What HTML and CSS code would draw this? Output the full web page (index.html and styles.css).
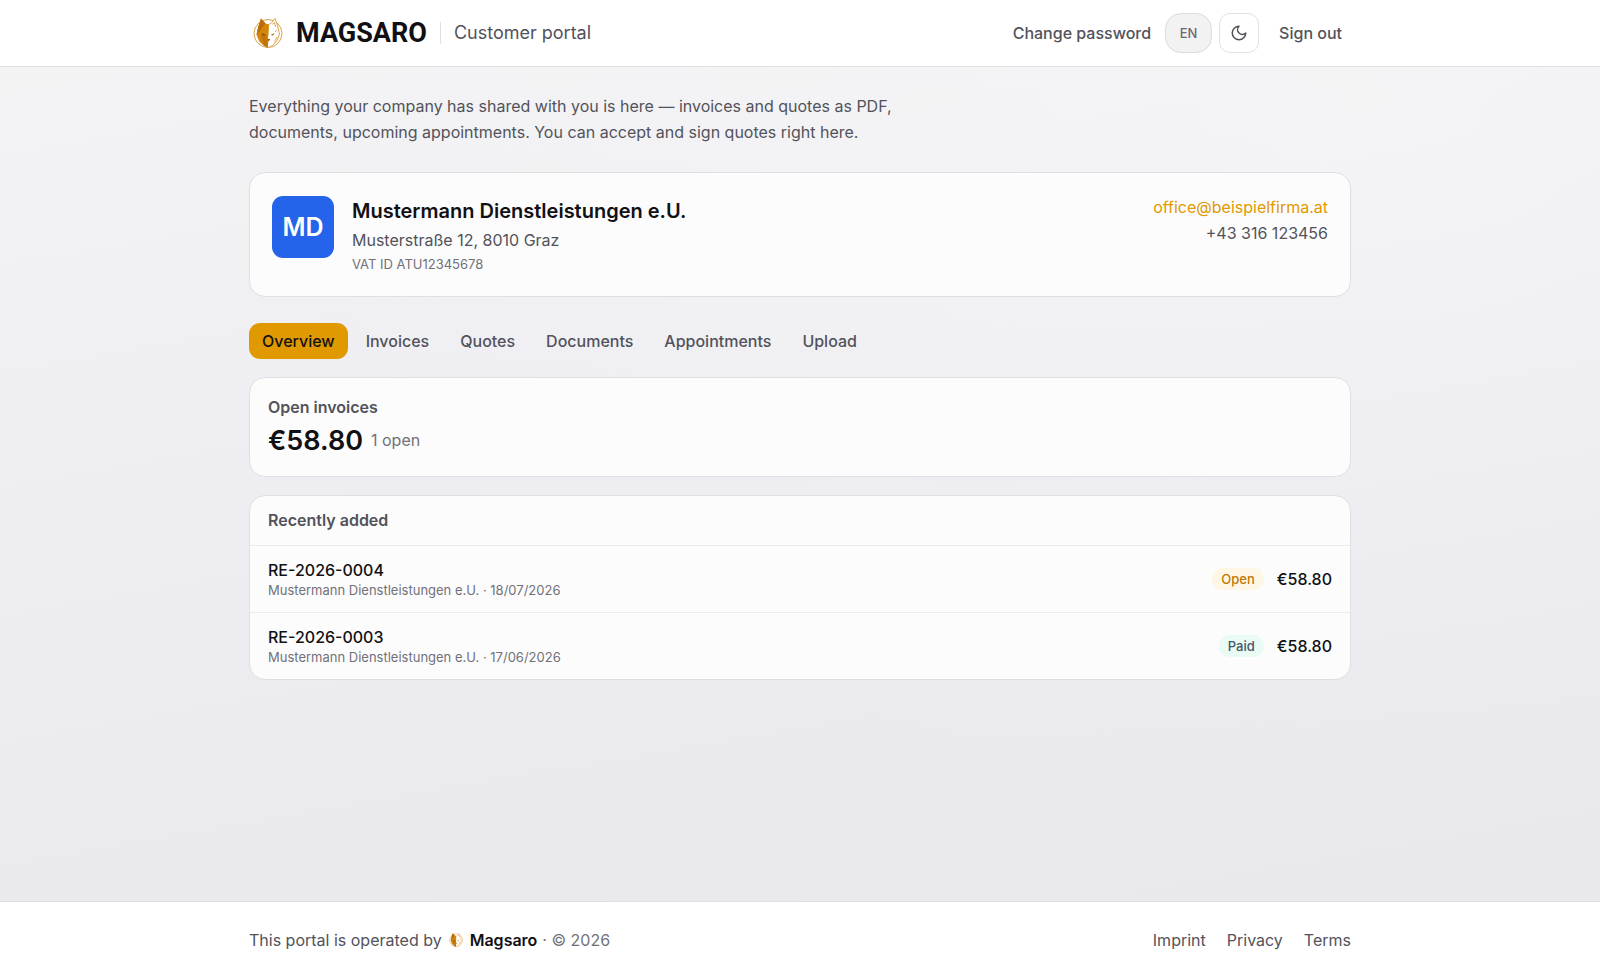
FILE: index.html
```html
<!DOCTYPE html>
<html lang="en">
<head>
    <meta charset="UTF-8">
    <meta name="viewport" content="width=device-width, initial-scale=1.0">
    <title>Customer portal</title>
    <link rel="stylesheet" href="styles.css">
</head>
<body>

    <!-- Wolf emblem, used in the header and the footer -->
    <svg class="sprite" aria-hidden="true">
        <symbol id="wolf" viewBox="0 0 60 60">
            <circle cx="30" cy="31" r="28" fill="#fff" stroke="#dda24a" stroke-width="2"/>
            <path d="M16 1 L25 11 L32 13 L32 30 L30 42 L32 46 L31 60 L21 55 L12 46 L7 33 L11 16 Z" fill="#d4860b"/>
            <path d="M16 1 L25 11 L20 17 L14 26 L7 33 L11 16 Z" fill="#b96c08"/>
            <path d="M16 32 L26 35 L27 43 L29 51 L30 60 L22 55 L18 44 Z" fill="#c0740a"/>
            <path d="M17 30 L27 34 L20 35 Z" fill="#8a5006"/>
            <path d="M32 13 L37 10 L44 1 L49 15 L53 32 L48 45 L39 55 L30 60" fill="#fff" stroke="#dda24a" stroke-width="2"/>
            <path d="M39 13 L43 9 L45 18 M47 24 L44 28 M48 38 L43 47" fill="none" stroke="#dda24a" stroke-width="2"/>
            <path d="M28 42 L35 42 L31 47 Z M35 34 L43 30 L40 35 Z" fill="#a85f08"/>
        </symbol>
    </svg>

    <header class="header">
        <div class="container header-inner">
            <a class="brand" href="#">
                <svg class="brand-icon"><use href="#wolf"/></svg>
                <span class="brand-name">MAGSARO</span>
            </a>
            <span class="portal-name">Customer portal</span>
            <nav class="header-nav">
                <a class="nav-link" href="#">Change password</a>
                <button class="lang-button" type="button" aria-label="Language">EN</button>
                <button class="theme-button" type="button" aria-label="Dark mode">
                    <svg class="moon" viewBox="0 0 24 24"><path d="M12 3a6 6 0 0 0 9 9 9 9 0 1 1-9-9Z"/></svg>
                </button>
                <button class="nav-link sign-out" type="button">Sign out</button>
            </nav>
        </div>
    </header>

    <main class="container main">
        <p class="intro">Everything your company has shared with you is here — invoices and quotes as PDF, documents, upcoming appointments. You can accept and sign quotes right here.</p>

        <section class="card company">
            <div class="company-logo">MD</div>
            <div class="company-info">
                <h1>Mustermann Dienstleistungen e.U.</h1>
                <p class="address">Musterstraße 12, 8010 Graz</p>
                <p class="vat">VAT ID ATU12345678</p>
            </div>
            <div class="company-contact">
                <a href="mailto:office@beispielfirma.at">office@beispielfirma.at</a>
                <span>+43 316 123456</span>
            </div>
        </section>

        <nav class="tabs">
            <button class="tab active" type="button">Overview</button>
            <button class="tab" type="button">Invoices</button>
            <button class="tab" type="button">Quotes</button>
            <button class="tab" type="button">Documents</button>
            <button class="tab" type="button">Appointments</button>
            <button class="tab" type="button">Upload</button>
        </nav>

        <section class="card open-invoices">
            <h2>Open invoices</h2>
            <p class="total"><strong>€58.80</strong> <span>1 open</span></p>
        </section>

        <section class="card recent">
            <h2>Recently added</h2>
            <ul>
                <li>
                    <div class="document">
                        <p class="number">RE-2026-0004</p>
                        <p class="details">Mustermann Dienstleistungen e.U. · 18/07/2026</p>
                    </div>
                    <span class="badge badge-open">Open</span>
                    <span class="amount">€58.80</span>
                </li>
                <li>
                    <div class="document">
                        <p class="number">RE-2026-0003</p>
                        <p class="details">Mustermann Dienstleistungen e.U. · 17/06/2026</p>
                    </div>
                    <span class="badge badge-paid">Paid</span>
                    <span class="amount">€58.80</span>
                </li>
            </ul>
        </section>
    </main>

    <footer class="footer">
        <div class="container footer-inner">
            <p class="operator">
                <span>This portal is operated by</span>
                <svg class="footer-icon"><use href="#wolf"/></svg>
                <a href="#">Magsaro</a>
                <span class="copyright">· © 2026</span>
            </p>
            <nav class="footer-nav">
                <a href="#">Imprint</a>
                <a href="#">Privacy</a>
                <a href="#">Terms</a>
            </nav>
        </div>
    </footer>

</body>
</html>
```
FILE: styles.css
```css
* {
    box-sizing: border-box;
}
body {
    display: flex;
    flex-direction: column;
    min-height: 100vh;
    margin: 0;
    font-family: Inter, "Liberation Sans", sans-serif;
    font-size: 16px;
    line-height: 24px;
    color: #52525b;
    background:
        radial-gradient(ellipse at 85% 10%, rgba(250, 250, 250, 0.4), rgba(250, 250, 250, 0) 60%),
        linear-gradient(170deg, #f4f4f5 0%, #efeff3 35%, #e9e9ee 75%, #e8e8ed 100%);
}
h1, h2, p, ul {
    margin: 0;
    padding: 0;
}
a {
    color: inherit;
    text-decoration: none;
}
button {
    font: inherit;
    color: inherit;
    background: none;
    border: none;
    padding: 0;
    cursor: pointer;
}
.sprite {
    position: absolute;
    width: 0;
    height: 0;
}
.container {
    width: 100%;
    max-width: 1150px;
    margin: 0 auto;
    padding: 0 24px;
}

/* Header */
.header {
    background: #fff;
    border-bottom: 1px solid #e1e1e4;
}
.header-inner {
    display: flex;
    align-items: center;
    height: 66px;
}
.brand {
    display: flex;
    align-items: center;
    gap: 13px;
    padding-left: 4px;
}
.brand-icon {
    width: 30px;
    height: 30px;
}
.brand-name {
    font-family: Roboto, sans-serif;
    font-size: 27px;
    font-weight: 700;
    color: #111114;
}
.portal-name {
    margin-left: 13px;
    padding-left: 13px;
    border-left: 1px solid #e1e1e4;
    font-size: 18px;
    line-height: 22px;
}
.header-nav {
    display: flex;
    align-items: center;
    gap: 7px;
    margin-left: auto;
}
.nav-link {
    padding: 0 7px;
    font-weight: 500;
}
.sign-out {
    margin-left: 4px;
    padding: 0 9px;
}
.lang-button {
    width: 47px;
    height: 40px;
    border: 1px solid #dcdcdf;
    border-radius: 16px;
    background: #f2f2f3;
    color: #696971;
    font-size: 13px;
    font-weight: 500;
}
.theme-button {
    display: flex;
    align-items: center;
    justify-content: center;
    width: 40px;
    height: 40px;
    border: 1px solid #e1e1e4;
    border-radius: 11px;
}
.moon {
    width: 18px;
    height: 18px;
    fill: none;
    stroke: currentColor;
    stroke-width: 2;
    stroke-linecap: round;
    stroke-linejoin: round;
}

/* Content */
.main {
    flex: 1;
    padding-top: 26px;
    padding-bottom: 36px;
}
.intro {
    max-width: 660px;
    margin-bottom: 27px;
    line-height: 26px;
}
.card {
    background: #fcfcfc;
    border: 1px solid #dfdfe3;
    border-radius: 16px;
}
.company {
    display: flex;
    gap: 18px;
    padding: 23px 22px 22px;
}
.company-logo {
    display: flex;
    align-items: center;
    justify-content: center;
    width: 62px;
    height: 62px;
    border-radius: 11px;
    background: #2563eb;
    color: #fff;
    font-size: 25px;
    font-weight: 600;
}
.company-info {
    flex: 1;
}
.company-info h1 {
    font-size: 20px;
    line-height: 30px;
    font-weight: 600;
    color: #111114;
}
.address {
    line-height: 28px;
}
.vat {
    line-height: 20px;
    font-size: 13px;
    color: #71717a;
}
.company-contact {
    display: flex;
    flex-direction: column;
    gap: 4px;
    text-align: right;
    line-height: 22px;
}
.company-contact a {
    color: #e09900;
}

.tabs {
    display: flex;
    flex-wrap: wrap;
    gap: 5px;
    margin: 26px 0 18px;
}
.tab {
    height: 36px;
    padding: 0 13px;
    border-radius: 11px;
    font-weight: 500;
}
.tab.active {
    background: #e09900;
    color: #111114;
}

h2 {
    font-size: 16px;
    line-height: 24px;
    font-weight: 600;
}
.open-invoices {
    padding: 17px 18px 14px;
}
.total {
    display: flex;
    align-items: center;
    gap: 8px;
    line-height: 43px;
    color: #71717a;
}
.total strong {
    font-size: 27px;
    font-weight: 600;
    color: #111114;
}

.recent {
    margin-top: 18px;
}
.recent h2 {
    padding: 12px 18px 13px;
}
.recent ul {
    list-style: none;
}
.recent li {
    display: flex;
    align-items: center;
    padding: 13px 18px;
    border-top: 1px solid #ebebed;
}
.document {
    flex: 1;
}
.number {
    line-height: 22px;
    font-weight: 500;
    color: #111114;
}
.details {
    line-height: 18px;
    font-size: 13px;
    color: #71717a;
}
.badge {
    margin-right: 13px;
    padding: 0 9px;
    border-radius: 11px;
    font-size: 13px;
    line-height: 22px;
    font-weight: 500;
}
.badge-open {
    background: #fff7e6;
    color: #c27803;
}
.badge-paid {
    background: #e9fbf4;
    color: #475569;
}
.amount {
    font-weight: 500;
    color: #111114;
}

/* Footer */
.footer {
    background: #fff;
    border-top: 1px solid #dfdfe3;
}
.footer-inner {
    display: flex;
    align-items: center;
    justify-content: space-between;
    height: 76px;
}
.operator {
    display: flex;
    align-items: center;
}
.footer-icon {
    width: 14px;
    height: 14px;
    margin: 0 7px;
}
.operator a {
    font-weight: 600;
    color: #111114;
}
.copyright {
    margin-left: 5px;
    color: #71717a;
}
.footer-nav {
    display: flex;
    gap: 21px;
}
```
